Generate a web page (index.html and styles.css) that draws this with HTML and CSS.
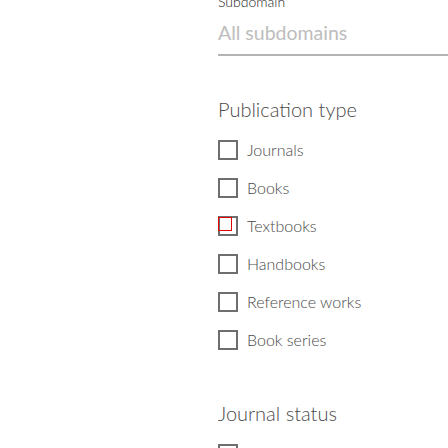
FILE: index.html
```html
<!DOCTYPE html>
<html lang="en">
<head>
<meta charset="utf-8">
<title>Filters</title>
<link rel="stylesheet" href="styles.css">
</head>
<body>
<div class="page">
  <aside class="filters">
    <div class="field">
      <div class="field-label">Subdomain</div>
      <div class="select">All subdomains</div>
    </div>

    <section class="group">
      <h2 class="group-title">Publication type</h2>
      <ul class="options">
        <li class="option"><span class="box"></span><span class="text">Journals</span></li>
        <li class="option"><span class="box"></span><span class="text">Books</span></li>
        <li class="option"><span class="box focused"></span><span class="text">Textbooks</span></li>
        <li class="option"><span class="box"></span><span class="text">Handbooks</span></li>
        <li class="option"><span class="box"></span><span class="text">Reference works</span></li>
        <li class="option"><span class="box"></span><span class="text">Book series</span></li>
      </ul>
    </section>

    <section class="group group-next">
      <h2 class="group-title">Journal status</h2>
      <ul class="options">
        <li class="option"><span class="box"></span><span class="text">Open access</span></li>
      </ul>
    </section>
  </aside>
</div>
</body>
</html>
```

FILE: styles.css
```css
html, body {
  margin: 0;
  padding: 0;
  background: #ffffff;
}

body {
  font-family: Lato, "Open Sans", sans-serif;
  overflow: hidden;
}

.page {
  padding-left: 218px;
}

.filters {
  display: flex;
  flex-direction: column;
}

.field-label {
  margin-top: -6px;
  font-size: 14px;
  line-height: 16px;
  font-weight: 300;
  color: #222222;
}

.select {
  padding: 11px 0 9px;
  font-size: 19.5px;
  line-height: 24px;
  color: #bdbdbd;
  border-bottom: 2px solid #b3b3b3;
}

.group {
  margin-top: 41px;
}

.group-next {
  margin-top: 51px;
}

.group-title {
  margin: 0;
  font-size: 20px;
  line-height: 24px;
  font-weight: 300;
  color: #4a4a4a;
}

.options {
  list-style: none;
  margin: 19px 0 0;
  padding: 0;
  display: flex;
  flex-direction: column;
  gap: 18px;
}

.option {
  display: flex;
  align-items: center;
  gap: 9px;
  height: 20px;
}

.box {
  position: relative;
  box-sizing: border-box;
  width: 20px;
  height: 20px;
  flex: none;
  border: 2px solid #6e6e6e;
}

.box.focused::after {
  content: "";
  position: absolute;
  left: -2px;
  top: -1px;
  width: 14px;
  height: 14px;
  box-sizing: border-box;
  border: 1px solid #e60000;
}

.text {
  font-size: 16px;
  line-height: 20px;
  font-weight: 300;
  color: #4a4a4a;
}
```
